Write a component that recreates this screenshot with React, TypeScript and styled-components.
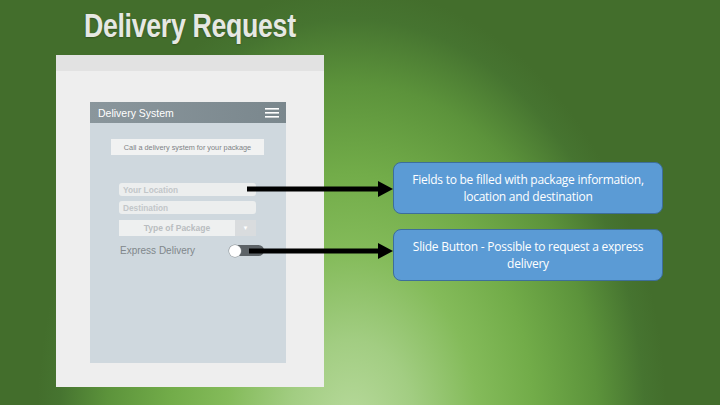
import React from "react";
import styled, { createGlobalStyle } from "styled-components";

const Global = createGlobalStyle`
  html, body { margin: 0; padding: 0; }
  body { width: 720px; height: 405px; overflow: hidden; }
`;

const Slide = styled.div`
  position: relative;
  width: 720px;
  height: 405px;
  overflow: hidden;
  background: radial-gradient(
    ellipse 315px 440px at 352px 428px,
    #b8da9c 0%,
    #a2cd82 20%,
    #84bb5a 40%,
    #72ac49 58%,
    #5c933b 78%,
    #467430 93%,
    #436e2c 100%
  );
  font-family: "Liberation Sans", Arial, sans-serif;
`;

const Title = styled.h1`
  margin: 0;
  padding: 7px 0 0 84px;
  height: 47px;
  box-sizing: border-box;
  font-family: "Liberation Sans", sans-serif;
  font-weight: 700;
  font-size: 33px;
  letter-spacing: -0.4px;
  color: #e6e8e3;
  text-shadow: 0 1px 2px rgba(0, 0, 0, 0.25);
  white-space: nowrap;
  > span {
    display: inline-block;
    transform: scaleX(0.81);
    transform-origin: left center;
  }
`;

const Body = styled.div`
  display: flex;
  align-items: flex-start;
  padding: 8px 0 0 56px;
  gap: 69px;
`;

const Phone = styled.div`
  width: 268px;
  height: 332px;
  background: #eeeeee;
  display: flex;
  flex-direction: column;
`;

const StatusBar = styled.div`
  height: 16px;
  background: #e2e2e2;
`;

const Screen = styled.div`
  margin: 31px 0 0 34px;
  width: 196px;
  height: 261px;
  background: #cfd8de;
  display: flex;
  flex-direction: column;
`;

const AppBar = styled.div`
  height: 21px;
  padding: 0 7px 0 8px;
  display: flex;
  align-items: center;
  justify-content: space-between;
  background: linear-gradient(90deg, #8a969c, #7a878d);
  color: #ffffff;
  font-size: 10.5px;
`;

const Content = styled.div`
  display: flex;
  flex-direction: column;
  padding: 16px 0 0 21px;
`;

const Banner = styled.div`
  width: 153px;
  height: 16px;
  background: #f1f2f2;
  display: flex;
  align-items: center;
  justify-content: center;
  color: #7e8286;
  font-size: 7.3px;
`;

const Form = styled.div`
  display: flex;
  flex-direction: column;
  gap: 5px;
  margin: 28px 0 0 8px;
  width: 137px;
`;

const Field = styled.div`
  height: 13px;
  border-radius: 3px;
  background: #eceeee;
  display: flex;
  align-items: center;
  padding-left: 4px;
  color: #c2c6c9;
  font-size: 8.3px;
  font-weight: 700;
`;

const Select = styled.div`
  height: 16px;
  display: flex;
  margin-top: 1px;
`;

const SelectLabel = styled.div`
  flex: 1;
  background: #eef0f0;
  display: flex;
  align-items: center;
  justify-content: center;
  color: #b9bdc0;
  font-size: 8.5px;
  font-weight: 700;
`;

const SelectCaret = styled.div`
  width: 21px;
  background: #d9dcde;
  display: flex;
  align-items: center;
  justify-content: center;
  color: #ffffff;
  font-size: 6px;
`;

const ToggleRow = styled.div`
  display: flex;
  align-items: center;
  justify-content: space-between;
  margin-top: 4px;
  padding-left: 1px;
  width: 144px;
  color: #80878b;
  font-size: 10px;
`;

const Track = styled.div<{ $on?: boolean }>`
  width: 35px;
  height: 11px;
  border-radius: 6px;
  background: #5d6367;
  display: flex;
  align-items: center;
  justify-content: ${(p) => (p.$on ? "flex-end" : "flex-start")};
`;

const Knob = styled.div`
  width: 12px;
  height: 12px;
  border-radius: 50%;
  background: #ffffff;
  box-shadow: 0 0 0 0.5px #8a9094;
`;

const Callouts = styled.div`
  display: flex;
  flex-direction: column;
  gap: 15px;
  margin-top: 107px;
`;

const Callout = styled.div`
  width: 270px;
  height: 52px;
  box-sizing: border-box;
  border: 1px solid #3d6e9b;
  border-radius: 8px;
  background: #5b9bd5;
  color: #ffffff;
  font-family: "Open Sans", Lato, sans-serif;
  font-size: 12px;
  line-height: 17px;
  letter-spacing: -0.25px;
  display: flex;
  align-items: center;
  justify-content: center;
  text-align: center;
  padding: 0 10px;
`;

const Arrows = styled.svg`
  position: absolute;
  left: 0;
  top: 0;
  pointer-events: none;
`;

const Menu = () => (
  <svg width="14" height="10" viewBox="0 0 14 10">
    <rect x="0" y="0" width="14" height="1.6" fill="#fff" />
    <rect x="0" y="4" width="14" height="1.6" fill="#fff" />
    <rect x="0" y="8" width="14" height="1.6" fill="#fff" />
  </svg>
);

const Arrow = ({ x1, x2, y }: { x1: number; x2: number; y: number }) => (
  <g fill="#000">
    <rect x={x1} y={y - 2.5} width={x2 - 14 - x1} height="5" />
    <polygon points={`${x2 - 15},${y - 8} ${x2},${y} ${x2 - 15},${y + 8}`} />
  </g>
);

export default function App() {
  return (
    <>
      <Global />
      <Slide>
        <Title>
          <span>Delivery Request</span>
        </Title>
        <Body>
          <Phone>
            <StatusBar />
            <Screen>
              <AppBar>
                <span>Delivery System</span>
                <Menu />
              </AppBar>
              <Content>
                <Banner>Call a delivery system for your package</Banner>
                <Form>
                  <Field>Your Location</Field>
                  <Field>Destination</Field>
                  <Select>
                    <SelectLabel>Type of Package</SelectLabel>
                    <SelectCaret>▼</SelectCaret>
                  </Select>
                  <ToggleRow>
                    <span>Express Delivery</span>
                    <Track>
                      <Knob />
                    </Track>
                  </ToggleRow>
                </Form>
              </Content>
            </Screen>
          </Phone>
          <Callouts>
            <Callout>Fields to be filled with package information, location and destination</Callout>
            <Callout>Slide Button - Possible to request a express delivery</Callout>
          </Callouts>
        </Body>
        <Arrows width="720" height="405">
          <Arrow x1={247} x2={393} y={189} />
          <Arrow x1={249} x2={393} y={251} />
        </Arrows>
      </Slide>
    </>
  );
}
